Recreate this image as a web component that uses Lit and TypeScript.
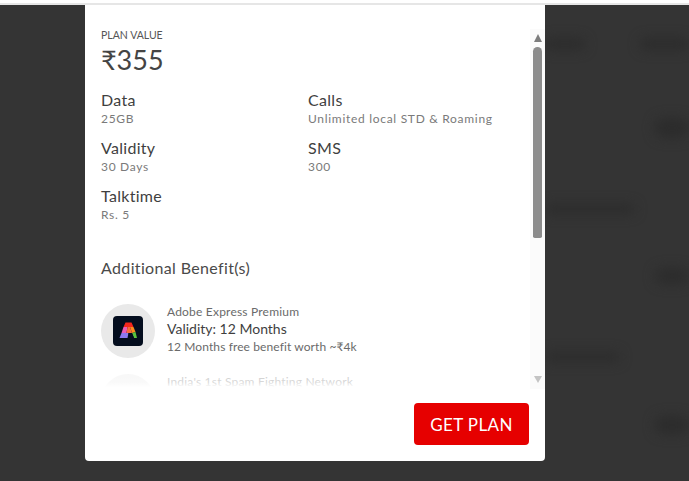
import { LitElement, html, css } from 'lit';
import { customElement } from 'lit/decorators.js';

const specs = [
  { label: 'Data', value: '25GB' },
  { label: 'Calls', value: 'Unlimited local STD & Roaming' },
  { label: 'Validity', value: '30 Days' },
  { label: 'SMS', value: '300' },
  { label: 'Talktime', value: 'Rs. 5' },
];

// blurred page content showing through the backdrop
const smudges = [
  { x: 545, y: 38, w: 40, h: 12 },
  { x: 640, y: 38, w: 49, h: 12 },
  { x: 655, y: 118, w: 34, h: 20 },
  { x: 545, y: 204, w: 90, h: 10 },
  { x: 655, y: 268, w: 34, h: 16 },
  { x: 545, y: 352, w: 75, h: 10 },
  { x: 655, y: 416, w: 34, h: 18 },
];

@customElement('app-root')
export class AppRoot extends LitElement {
  static styles = css`
    :host {
      display: block;
      width: 689px;
      height: 481px;
      overflow: hidden;
      position: relative;
      background: #343434;
      font-family: 'Lato', 'Noto Sans', sans-serif;
      color: #3a3a3a;
    }

    .strip {
      height: 3px;
      background: #fff;
      border-bottom: 2px solid #e6e6e6;
    }

    .smudge {
      position: absolute;
      background: #2c2c2c;
      border-radius: 8px;
      filter: blur(6px);
    }

    .modal {
      position: relative;
      margin-left: 85px;
      width: 460px;
      height: 456px;
      background: #fff;
      border-radius: 0 0 4px 4px;
      display: flex;
      flex-direction: column;
    }

    .scroller {
      height: 384px;
      display: flex;
      overflow: hidden;
      position: relative;
    }

    .content {
      flex: 1;
      padding: 24px 0 0 16px;
      min-width: 0;
    }

    .eyebrow {
      font-size: 10.5px;
      line-height: 13px;
      color: #555;
      text-transform: uppercase;
    }

    .price {
      font-size: 27px;
      line-height: 32px;
      margin-top: 2px;
      color: #444;
    }

    .specs {
      display: grid;
      grid-template-columns: 207px 1fr;
      grid-auto-rows: 48px;
      margin-top: 14px;
    }

    .spec-label {
      font-size: 16px;
      line-height: 20px;
      color: #3f3f3f;
      letter-spacing: 0.3px;
    }

    .spec-value {
      font-size: 12px;
      line-height: 16px;
      margin-top: 1px;
      color: #7a7a7a;
      letter-spacing: 0.7px;
    }

    .heading {
      font-size: 16px;
      line-height: 20px;
      margin-top: 24px;
      color: #4a4a4a;
      letter-spacing: 0.35px;
    }

    .benefit {
      display: flex;
      gap: 12px;
      margin-top: 26px;
    }

    .benefit + .benefit {
      margin-top: 16px;
    }

    .disc {
      width: 54px;
      height: 54px;
      border-radius: 50%;
      background: #e9e9e9;
      flex: none;
      display: flex;
      align-items: center;
      justify-content: center;
    }

    .disc svg {
      display: block;
    }

    .benefit-name {
      font-size: 12px;
      line-height: 15px;
      color: #6a6a6a;
      letter-spacing: 0.2px;
    }

    .benefit-validity {
      font-size: 14px;
      line-height: 20px;
      color: #3f3f3f;
    }

    .benefit-note {
      font-size: 12px;
      line-height: 16px;
      color: #6a6a6a;
      letter-spacing: 0.1px;
    }

    .fade {
      position: absolute;
      left: 0;
      right: 15px;
      bottom: 0;
      height: 22px;
      background: linear-gradient(rgba(255, 255, 255, 0.6), rgba(255, 255, 255, 0.75) 70%, #fff 92%);
    }

    .bar {
      width: 15px;
      flex: none;
      margin-top: 24px;
      background: #fbfbfb;
      display: flex;
      flex-direction: column;
      align-items: center;
    }

    .arrow-up {
      margin-top: 5px;
      width: 0;
      height: 0;
      border-left: 4.5px solid transparent;
      border-right: 4.5px solid transparent;
      border-bottom: 8px solid #7d7d7d;
    }

    .thumb {
      width: 9px;
      height: 191px;
      margin-top: 5px;
      background: #8c8c8c;
      border-radius: 5px 5px 2px 2px;
    }

    .arrow-down {
      margin-top: 138px;
      width: 0;
      height: 0;
      border-left: 4.5px solid transparent;
      border-right: 4.5px solid transparent;
      border-top: 7px solid #c4c4c4;
    }

    .footer {
      flex: 1;
      display: flex;
      justify-content: flex-end;
      padding: 14px 16px 16px 0;
    }

    .get-plan {
      width: 115px;
      height: 42px;
      border: none;
      border-radius: 4px;
      background: #e60000;
      color: #fff;
      font: inherit;
      font-size: 17px;
      letter-spacing: 0.4px;
      padding: 0;
    }
  `;

  private adobeIcon() {
    return html`<svg width="30" height="30" viewBox="0 0 30 30">
      <rect width="30" height="30" rx="4" fill="#040d1e" />
      <path d="M12.500 6.500h6l2 4.500H10.500z" fill="#f4261c" />
      <path d="M17 11h3.500l2 5-3.500 1z" fill="#fb8a1e" />
      <path d="M19 17l3.500-1 1.500 6h-3z" fill="#58c23c" />
      <path d="M10.500 11H14.500l-1 6H8.500z" fill="#e85bb8" />
      <path d="M14.500 11H17l2 6h-5.500z" fill="#f76a3a" />
      <path d="M8.500 17h7l-1 5H6.500z" fill="#8a78f0" />
      <path d="M15.500 17H19l2 5h-2.500l-1-2h-2z" fill="#040d1e" />
    </svg>`;
  }

  render() {
    return html`
      <div class="strip"></div>
      ${smudges.map(
        (s) =>
          html`<div
            class="smudge"
            style="left:${s.x}px;top:${s.y}px;width:${s.w}px;height:${s.h}px"
          ></div>`
      )}
      <div class="modal">
        <div class="scroller">
          <div class="content">
            <div class="eyebrow">Plan value</div>
            <div class="price">₹355</div>
            <div class="specs">
              ${specs.map(
                (s) => html`<div>
                  <div class="spec-label">${s.label}</div>
                  <div class="spec-value">${s.value}</div>
                </div>`
              )}
            </div>
            <div class="heading">Additional Benefit(s)</div>
            <div class="benefit">
              <div class="disc">${this.adobeIcon()}</div>
              <div>
                <div class="benefit-name">Adobe Express Premium</div>
                <div class="benefit-validity">Validity: 12 Months</div>
                <div class="benefit-note">12 Months free benefit worth ~₹4k</div>
              </div>
            </div>
            <div class="benefit">
              <div class="disc"></div>
              <div>
                <div class="benefit-name">India's 1st Spam Fighting Network</div>
              </div>
            </div>
            <div class="fade"></div>
          </div>
          <div class="bar">
            <div class="arrow-up"></div>
            <div class="thumb"></div>
            <div class="arrow-down"></div>
          </div>
        </div>
        <div class="footer">
          <button class="get-plan">GET PLAN</button>
        </div>
      </div>
    `;
  }
}
